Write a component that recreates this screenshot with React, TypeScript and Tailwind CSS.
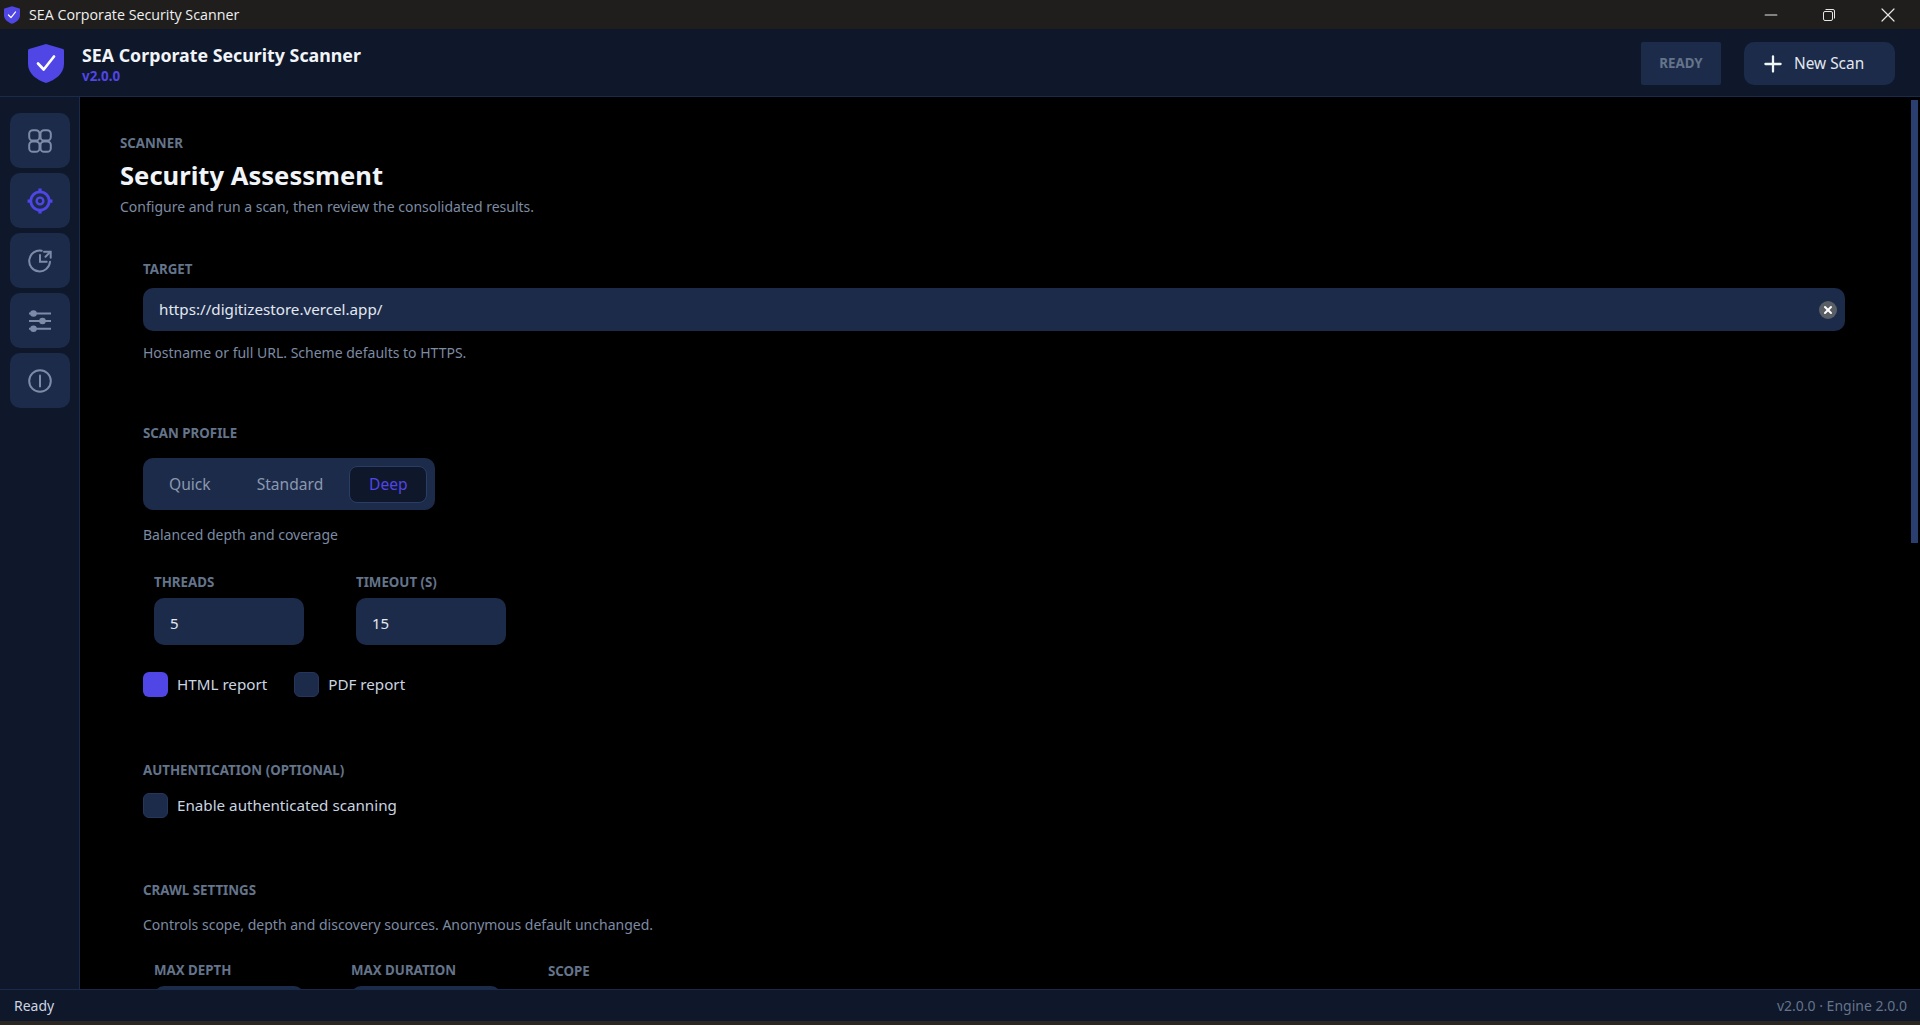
import { Minus, Plus, X } from "lucide-react";

function ShieldLogo({ className }: { className: string }) {
  return (
    <svg viewBox="0 0 36 39" className={className}>
      <path
        d="M18 0 L35 5 Q36 5.3 36 6.5 L36 20 C36 30 27 36 18 39 C9 36 0 30 0 20 L0 6.5 Q0 5.3 1 5 Z"
        fill="#4f46e5"
      />
      <path
        d="M10 19.5 L15.7 25.5 L26 12.5"
        fill="none"
        stroke="#ffffff"
        strokeWidth="2.7"
        strokeLinecap="round"
        strokeLinejoin="round"
      />
    </svg>
  );
}

function GridIcon() {
  return (
    <svg viewBox="0 0 24 24" className="w-[24px] h-[24px]" fill="none" stroke="currentColor" strokeWidth="2">
      <rect x="1.2" y="1.2" width="10.3" height="10.3" rx="3.6" />
      <rect x="12.5" y="1.2" width="10.3" height="10.3" rx="3.6" />
      <rect x="1.2" y="12.5" width="10.3" height="10.3" rx="3.6" />
      <rect x="12.5" y="12.5" width="10.3" height="10.3" rx="3.6" />
    </svg>
  );
}

function TargetIcon() {
  return (
    <svg viewBox="0 0 24 24" className="w-[26px] h-[26px]" fill="none" stroke="currentColor" strokeWidth="2.6">
      <circle cx="12" cy="12" r="8.5" />
      <circle cx="12" cy="12" r="3.1" strokeWidth="2.2" />
      <path d="M12 0.5V4.5M12 19.5v4M0.5 12H4.5M19.5 12h4" strokeWidth="3" />
    </svg>
  );
}

function HistoryIcon() {
  return (
    <svg viewBox="0 0 24 24" className="w-[24px] h-[24px]" fill="none" stroke="currentColor" strokeWidth="2" strokeLinecap="round">
      <path d="M13.7 1.8A10.4 10.4 0 1 0 22 12.7" />
      <path d="M12 6V12.7H18.7" />
      <path d="M16 2.7H22.7V8.7" />
      <path d="M22 3.2L17.5 7.7" />
    </svg>
  );
}

function SlidersIcon() {
  return (
    <svg viewBox="0 0 24 24" className="w-[24px] h-[24px]" fill="none" stroke="currentColor" strokeWidth="2">
      <path d="M1 4.5H23M1 12H23M1 19.7H23" />
      <circle cx="5.5" cy="4.5" r="3.3" fill="currentColor" stroke="none" />
      <circle cx="14.5" cy="12" r="3.3" fill="currentColor" stroke="none" />
      <circle cx="5.5" cy="19.7" r="3.3" fill="currentColor" stroke="none" />
    </svg>
  );
}

function InfoIcon() {
  return (
    <svg viewBox="0 0 24 24" className="w-[24px] h-[24px]" fill="none" stroke="currentColor" strokeWidth="2">
      <circle cx="12" cy="12" r="10.8" />
      <path d="M12 6.5V17.5" strokeLinecap="round" />
    </svg>
  );
}

function RestoreIcon() {
  return (
    <svg viewBox="0 0 12 12" className="w-[12px] h-[12px]" fill="none" stroke="#e5e5e5" strokeWidth="1">
      <rect x="0.5" y="2.5" width="9" height="9" rx="1.5" />
      <path d="M2.5 0.5H10A1.5 1.5 0 0 1 11.5 2V9.5" />
    </svg>
  );
}

function SectionLabel({ children, className = "" }: { children: string; className?: string }) {
  return (
    <div className={`text-[13.3px] leading-[18px] font-bold text-[#64748b] ${className}`}>{children}</div>
  );
}

function Hint({ children, className = "" }: { children: string; className?: string }) {
  return <div className={`text-[14px] leading-[20px] text-[#7d8ba3] ${className}`}>{children}</div>;
}

function NumberField({ label, value = "" }: { label: string; value?: string }) {
  return (
    <div className="w-[150px]">
      <SectionLabel>{label}</SectionLabel>
      <div className="mt-[7px] h-[47px] rounded-[10px] bg-[#1c2b4a] flex items-center pl-[16px] pt-[3px] text-[15px] text-[#e2e8f0]">
        {value}
      </div>
    </div>
  );
}

function Check({ label, checked = false }: { label: string; checked?: boolean }) {
  return (
    <div className="flex items-center gap-[9px]">
      <div
        className={
          checked
            ? "w-[25px] h-[25px] rounded-[6px] bg-[#4f46e5]"
            : "w-[25px] h-[25px] rounded-[6px] bg-[#1c2b4a] border border-[#24365c]"
        }
      />
      <span className="text-[15.2px] text-[#cbd5e1]">{label}</span>
    </div>
  );
}

const navItems = [
  { icon: <GridIcon />, active: false },
  { icon: <TargetIcon />, active: true },
  { icon: <HistoryIcon />, active: false },
  { icon: <SlidersIcon />, active: false },
  { icon: <InfoIcon />, active: false },
];

export default function App() {
  return (
    <div className="h-screen flex flex-col overflow-hidden bg-black font-['Noto_Sans',sans-serif]">
      <div className="h-[29px] shrink-0 bg-[#1f1e1d] flex items-center pl-[4px] font-['Open_Sans',sans-serif]">
        <ShieldLogo className="w-[16px] h-[18px]" />
        <span className="ml-[9px] text-[14.25px] text-[#f0f0f0]">SEA Corporate Security Scanner</span>
        <div className="ml-auto flex items-center text-[#e5e5e5]">
          <Minus size={20} strokeWidth={1.4} />
          <div className="ml-[42px]">
            <RestoreIcon />
          </div>
          <X size={24} strokeWidth={1.2} className="ml-[41px] mr-[20px]" />
        </div>
      </div>

      <header className="h-[68px] shrink-0 bg-[#0f172a] border-b border-[#1a2a4a] flex items-center pl-[28px] pr-[25px] pt-[2px]">
        <ShieldLogo className="w-[36px] h-[39px]" />
        <div className="ml-[18px]">
          <div className="text-[17.8px] leading-[24px] font-bold text-[#f1f5f9]">SEA Corporate Security Scanner</div>
          <div className="text-[13.4px] leading-[18px] font-bold text-[#4f46e5]">v2.0.0</div>
        </div>
        <div className="ml-auto w-[80px] h-[43px] rounded-[2px] bg-[#1c2b4a] flex items-center justify-center text-[13.3px] font-bold text-[#64748b]">
          READY
        </div>
        <div className="ml-[23px] w-[151px] h-[43px] rounded-[10px] bg-[#1c2b4a] flex items-center pl-[16px] text-[#e2e8f0]">
          <Plus size={26} strokeWidth={2.1} className="text-[#f1f5f9]" />
          <span className="ml-[8px] text-[15.4px]">New Scan</span>
        </div>
      </header>

      <div className="flex-1 min-h-0 flex">
        <aside className="w-[80px] shrink-0 bg-[#0f172a] border-r border-[#1a2a4a] pt-[16px] pl-[10px] flex flex-col gap-[5px]">
          {navItems.map((item, i) => (
            <div
              key={i}
              className={`w-[60px] h-[55px] rounded-[10px] bg-[#1c2b4a] flex items-center justify-center ${
                item.active ? "text-[#4f46e5]" : "text-[#7d8ba8]"
              }`}
            >
              {item.icon}
            </div>
          ))}
        </aside>

        <main className="relative flex-1 min-w-0 overflow-hidden bg-black pl-[40px] pt-[37px]">
          <SectionLabel>SCANNER</SectionLabel>
          <h1 className="mt-[5px] text-[25.6px] leading-[38px] font-bold text-[#f1f5f9]">Security Assessment</h1>
          <Hint className="mt-[2px]">Configure and run a scan, then review the consolidated results.</Hint>

          <div className="pl-[23px] pr-[75px]">
            <SectionLabel className="mt-[43px]">TARGET</SectionLabel>
            <div className="mt-[10px] h-[43px] rounded-[10px] bg-[#1c2b4a] flex items-center pl-[16px] pr-[8px] text-[15.2px] text-[#e2e8f0]">
              https://digitizestore.vercel.app/
              <div className="ml-auto w-[18px] h-[18px] rounded-full bg-[#5a5f66] flex items-center justify-center">
                <X size={12} strokeWidth={4} className="text-white" />
              </div>
            </div>
            <Hint className="mt-[12px]">Hostname or full URL. Scheme defaults to HTTPS.</Hint>

            <SectionLabel className="mt-[61px]">SCAN PROFILE</SectionLabel>
            <div className="mt-[16px] w-[292px] h-[52px] rounded-[10px] bg-[#1c2b4a] flex items-center pl-[26px] text-[15.6px] text-[#8b98ae]">
              <span className="pt-[2px]">Quick</span>
              <span className="ml-[46px] pt-[2px]">Standard</span>
              <div className="ml-[26px] w-[78px] h-[37px] rounded-[8px] bg-[#0f172a] border border-[#2a3d66] flex items-center justify-center text-[#4f46e5] pt-[2px]">
                Deep
              </div>
            </div>
            <Hint className="mt-[15px]">Balanced depth and coverage</Hint>

            <div className="mt-[28px] ml-[11px] flex gap-[52px]">
              <NumberField label="THREADS" value="5" />
              <NumberField label="TIMEOUT (S)" value="15" />
            </div>

            <div className="mt-[27px] flex gap-[27px]">
              <Check label="HTML report" checked />
              <Check label="PDF report" />
            </div>

            <SectionLabel className="mt-[64px]">AUTHENTICATION (OPTIONAL)</SectionLabel>
            <div className="mt-[14px]">
              <Check label="Enable authenticated scanning" />
            </div>

            <SectionLabel className="mt-[63px]">CRAWL SETTINGS</SectionLabel>
            <Hint className="mt-[16px]">Controls scope, depth and discovery sources. Anonymous default unchanged.</Hint>

            <div className="mt-[26px] ml-[11px] flex gap-[47px]">
              <NumberField label="MAX DEPTH" />
              <NumberField label="MAX DURATION" />
              <div className="pt-[1px]">
                <SectionLabel>SCOPE</SectionLabel>
              </div>
            </div>
          </div>

          <div className="absolute right-[2px] top-[3px] w-[7px] h-[443px] bg-[#2a3f6f]" />
        </main>
      </div>

      <footer className="h-[32px] shrink-0 bg-[#0f172a] border-t border-[#1a2a4a] flex items-center pl-[14px] pr-[13px] text-[14px]">
        <span className="text-[#cbd5e1]">Ready</span>
        <span className="ml-auto text-[#64748b]">v2.0.0 · Engine 2.0.0</span>
      </footer>
      <div className="h-[4px] shrink-0 bg-[#2a2622]" />
    </div>
  );
}
